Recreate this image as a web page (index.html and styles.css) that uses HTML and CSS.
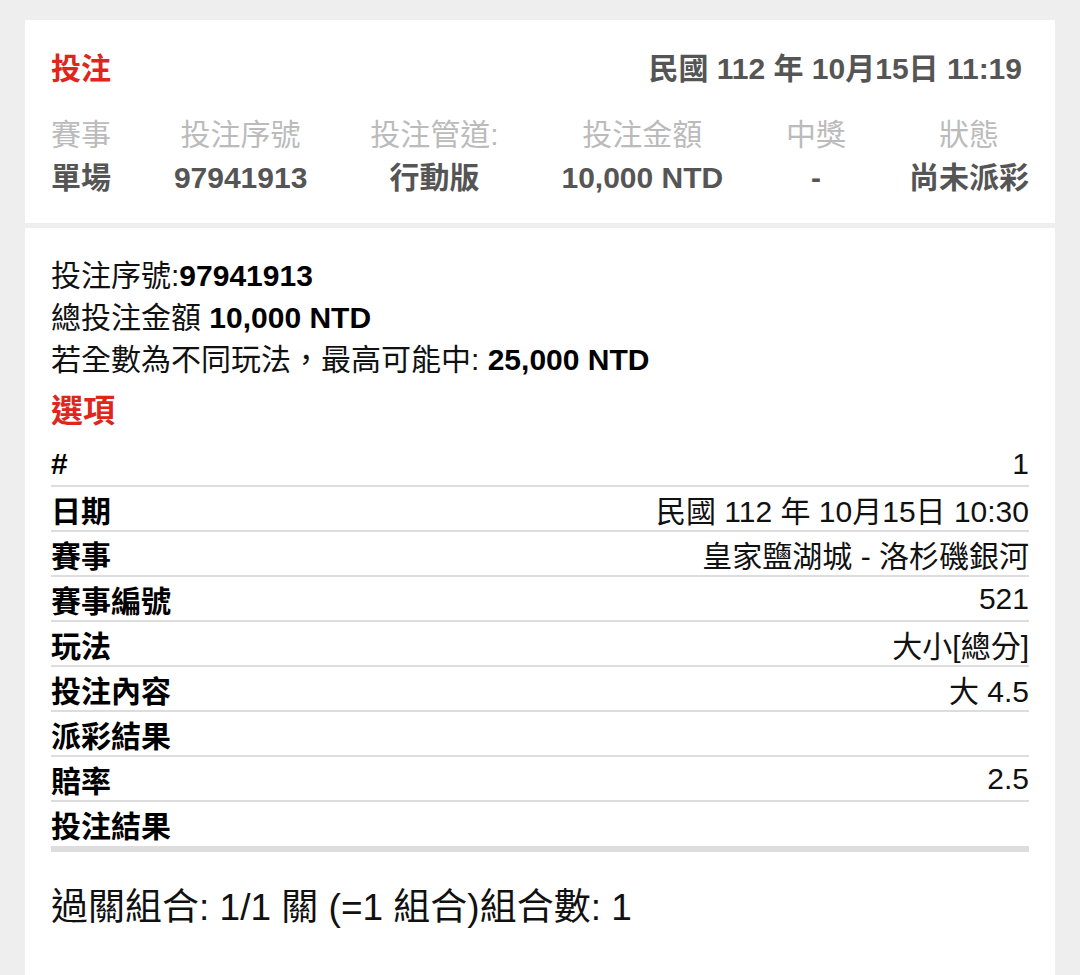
FILE: index.html
```html
<!DOCTYPE html>
<html lang="zh-Hant">
<head>
<meta charset="UTF-8">
<meta name="viewport" content="width=device-width, initial-scale=1.0">
<title>投注</title>
<link rel="stylesheet" href="styles.css">
</head>
<body>
    <div class="card summary">
        <div class="summary-head">
            <span class="title">投注</span>
            <span class="date">民國 112 年 10月15日 11:19</span>
        </div>
        <div class="summary-cols">
            <div class="col"><div class="label">賽事</div><div class="value">單場</div></div>
            <div class="col"><div class="label">投注序號</div><div class="value">97941913</div></div>
            <div class="col"><div class="label">投注管道:</div><div class="value">行動版</div></div>
            <div class="col"><div class="label">投注金額</div><div class="value">10,000 NTD</div></div>
            <div class="col"><div class="label">中獎</div><div class="value">-</div></div>
            <div class="col"><div class="label">狀態</div><div class="value">尚未派彩</div></div>
        </div>
    </div>

    <div class="card detail">
        <div class="info">
            <div>投注序號:<b>97941913</b></div>
            <div>總投注金額 <b>10,000 NTD</b></div>
            <div>若全數為不同玩法，最高可能中: <b>25,000 NTD</b></div>
        </div>
        <div class="section-title">選項</div>
        <div class="options">
            <div class="row"><span class="key">#</span><span class="val">1</span></div>
            <div class="row"><span class="key">日期</span><span class="val">民國 112 年 10月15日 10:30</span></div>
            <div class="row"><span class="key">賽事</span><span class="val">皇家鹽湖城 - 洛杉磯銀河</span></div>
            <div class="row"><span class="key">賽事編號</span><span class="val">521</span></div>
            <div class="row"><span class="key">玩法</span><span class="val">大小[總分]</span></div>
            <div class="row"><span class="key">投注內容</span><span class="val">大 4.5</span></div>
            <div class="row"><span class="key">派彩結果</span><span class="val"></span></div>
            <div class="row"><span class="key">賠率</span><span class="val">2.5</span></div>
            <div class="row last"><span class="key">投注結果</span><span class="val"></span></div>
        </div>
        <div class="combo">過關組合: 1/1 關 (=1 組合)組合數: 1</div>
    </div>
</body>
</html>
```

FILE: styles.css
```css
body {
    margin: 0;
    padding: 20px 25px 0;
    background-color: #eeeeee;
    font-family: "Liberation Sans", "Noto Sans CJK TC", sans-serif;
    color: #111;
}

.card {
    background-color: #fff;
    padding: 0 26px;
}

/* 上方摘要 */
.summary {
    height: 203px;
    box-sizing: border-box;
    padding-top: 28px;
}

.summary-head {
    display: flex;
    justify-content: space-between;
    align-items: center;
    height: 36px;
}

.title {
    color: #e0261c;
    font-size: 30px;
    font-weight: bold;
}

.date {
    color: #555;
    font-size: 30px;
    font-weight: bold;
    margin-right: 7px;
}

.summary-cols {
    display: flex;
    justify-content: space-between;
    margin-top: 31px;
}

.col {
    text-align: center;
}

.col .label {
    color: #bbb;
    font-size: 30px;
    line-height: 40px;
}

.col .value {
    color: #555;
    font-size: 30px;
    font-weight: bold;
    line-height: 46px;
}

/* 下方明細 */
.detail {
    margin-top: 5px;
    padding-top: 27px;
    padding-bottom: 80px;
}

.info {
    font-size: 30px;
    line-height: 42px;
}

.info b {
    color: #000;
}

.section-title {
    color: #e0261c;
    font-size: 32px;
    font-weight: bold;
    line-height: 44px;
    margin-top: 8px;
    margin-bottom: 9px;
}

.options {
    border-bottom: 6px solid #ddd;
}

.row {
    display: flex;
    justify-content: space-between;
    align-items: center;
    height: 43px;
    border-bottom: 2px solid #ddd;
    font-size: 30px;
}

.row.last {
    border-bottom: none;
    height: 44px;
}

.key {
    font-weight: bold;
    color: #000;
}

.val {
    color: #111;
}

.combo {
    font-size: 37px;
    margin-top: 25px;
    color: #111;
}
```
